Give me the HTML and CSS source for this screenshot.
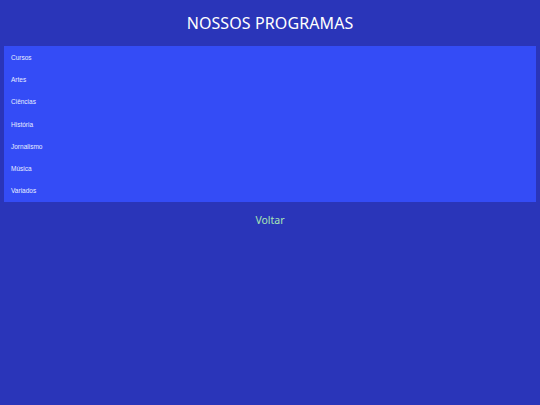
FILE: index.html
```html
<!DOCTYPE html>
<html lang="pt">
<head>
<meta charset="utf-8">
<link rel="stylesheet" href="styles.css">
</head>
<body>
<header class="header"><h1 class="title">NOSSOS PROGRAMAS</h1></header>
<ul class="list">
  <li class="item">Cursos</li>
  <li class="item">Artes</li>
  <li class="item">Ciências</li>
  <li class="item">História</li>
  <li class="item">Jornalismo</li>
  <li class="item">Música</li>
  <li class="item">Variados</li>
</ul>
<div class="back"><a class="back-link">Voltar</a></div>
</body>
</html>
```
FILE: styles.css
```css
html, body { margin: 0; padding: 0; }
body {
  background: #2a35b9;
  width: 540px;
  height: 405px;
  font-family: "Noto Sans", "Open Sans", sans-serif;
}
.header {
  height: 46px;
  display: flex;
  align-items: center;
  justify-content: center;
}
.title {
  margin: 0;
  color: #ffffff;
  font-weight: 400;
  font-size: 16px;
  letter-spacing: 0.1px;
}
.list {
  list-style: none;
  margin: 0 4px;
  padding: 0;
  background: #344cf6;
}
.item {
  height: 22.3px;
  display: flex;
  align-items: center;
  padding-left: 7px;
  color: #e8ecff;
  font-family: "Liberation Sans", Arial, sans-serif;
  font-size: 6.5px;
}
.back {
  display: flex;
  justify-content: center;
  padding-top: 11px;
}
.back-link {
  color: #a8e6b4;
  font-size: 10.5px;
}
```
